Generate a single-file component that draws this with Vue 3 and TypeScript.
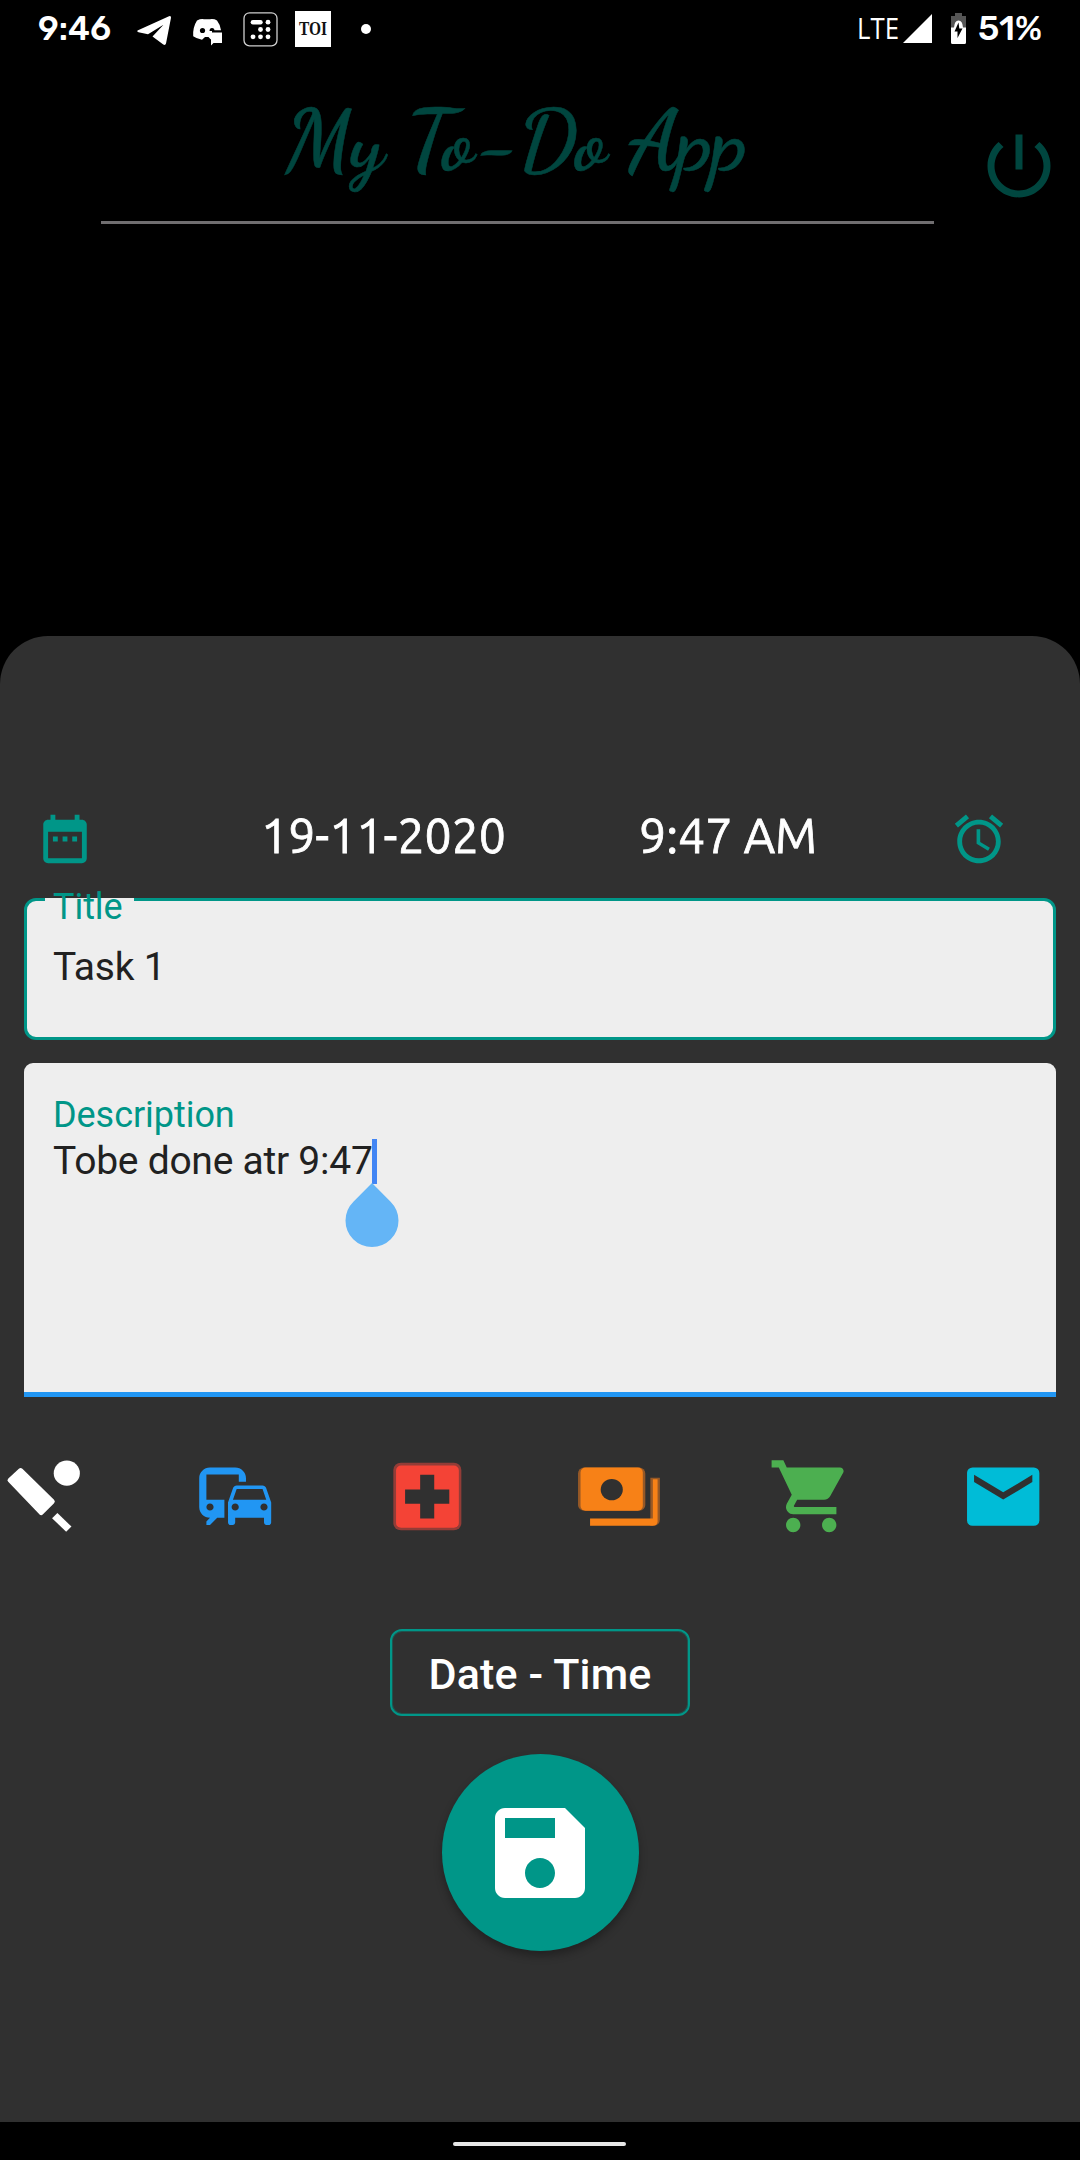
<script setup lang="ts">
import { ref } from 'vue'

interface Category {
  name: string
  box: string
}

const categories: Category[] = [
  { name: 'sports', box: '0 -1 86 89' },
  { name: 'commute', box: '0 0 24 24' },
  { name: 'health', box: '0 -1 86 89' },
  { name: 'money', box: '0 -1 86 89' },
  { name: 'shopping', box: '0 0 24 24' },
  { name: 'mail', box: '0 -1 86 89' },
]

const date = ref('19-11-2020')
const time = ref('9:47 AM')
const title = ref('Task 1')
const description = ref('Tobe done atr 9:47')
</script>

<template>
  <div class="screen">
    <header class="status">
      <svg class="clock" width="73" height="58"><text x="0" y="40" textLength="73" lengthAdjust="spacingAndGlyphs">9:46</text></svg>
      <svg class="tg" width="34" height="58"><path d="M0.5 30.500L32 16.200q2.200-.7 2 1.500L29 43.500q-.7 2.200-2.700 1L15.500 36.500L26.500 24.800L11 34.300L1.500 32.200Q-.500 31.500 .5 30.500z" fill="#fff" /></svg>
      <svg class="dc" width="31" height="58">
        <path d="M5 20.500q4-2 7-1.300h6q4-.6 7 1.300q3.500 4.500 4 9.800h-9v9h-1.500l-2-2.300h-3.500l-3 2.800q-5-.8-8.800-3.500q-.6-9 3.800-15.800z" fill="#fff" />
        <circle cx="10.500" cy="30.500" r="2.600" fill="#000" />
        <path d="M17.500 31q0-3 2.500-3t2.500 3" fill="#000" />
        <path d="M19 32.500h11v10.500h-8.500l-2.500 2.600z" fill="#fff" />
      </svg>
      <svg class="grid" width="35" height="58" fill="#fff">
        <rect x="1" y="12.800" width="33" height="33" rx="5.500" fill="none" stroke="#d0d0d0" stroke-width="1.300" />
        <rect x="7.700" y="20" width="12" height="4.400" rx="2.200" />
        <circle cx="25" cy="22.200" r="2.400" />
        <circle cx="17.500" cy="29.500" r="2.400" /><circle cx="25" cy="29.500" r="2.400" />
        <circle cx="10" cy="36.800" r="2.400" /><circle cx="17.500" cy="36.800" r="2.400" /><circle cx="25" cy="36.800" r="2.400" />
      </svg>
      <svg class="toi" width="36" height="58">
        <rect y="11" width="36" height="36" fill="#fff" />
        <text x="4" y="35" textLength="28" lengthAdjust="spacingAndGlyphs">TOI</text>
      </svg>
      <span class="dot"></span>
      <span class="spacer"></span>
      <svg class="lte" width="42" height="58"><text x="0" y="38.500" textLength="42" lengthAdjust="spacingAndGlyphs">LTE</text></svg>
      <svg class="signal" width="29" height="58"><path d="M0 43L29 14V43z" fill="#fff" /></svg>
      <svg class="battery" width="15" height="58">
        <path d="M4 13h7v3h4v12h-15v-12h4z" fill="#555" />
        <path d="M0 27.500h3q.5-7 4.500-7t4.500 7h3v15q0 1.500-1.500 1.500h-12q-1.500 0-1.500-1.500z" fill="#fff" />
        <path d="M7.500 22.500L3.500 31.500h3v6.500l5-9.500h-3.200z" fill="#000" />
      </svg>
      <svg class="percent" width="64" height="58"><text x="0" y="40" textLength="64" lengthAdjust="spacingAndGlyphs">51%</text></svg>
    </header>

    <div class="appbar">
      <div class="heading">
        <svg class="brand" width="833" height="140"><text x="184" y="87" textLength="462" lengthAdjust="spacingAndGlyphs">My To-Do App</text></svg>
      </div>
      <svg class="power" viewBox="0 0 24 24" width="84" height="84"><path d="M13 3h-2v10h2V3zm4.830 2.170l-1.420 1.420C17.990 7.860 19 9.810 19 12c0 3.870-3.130 7-7 7s-7-3.130-7-7c0-2.190 1.010-4.140 2.580-5.420L6.170 5.170C4.230 6.820 3 9.260 3 12c0 4.970 4.030 9 9 9s9-4.030 9-9c0-2.740-1.230-5.180-3.170-6.830z" /></svg>
    </div>

    <main class="sheet">
      <div class="when">
        <svg class="teal" viewBox="0 0 24 24" width="58" height="58"><path d="M9 11H7v2h2v-2zm4 0h-2v2h2v-2zm4 0h-2v2h2v-2zm2-7h-1V2h-2v2H8V2H6v2H5c-1.110 0-1.990.9-1.990 2L3 20c0 1.100.89 2 2 2h14c1.100 0 2-.9 2-2V6c0-1.100-.9-2-2-2zm0 16H5V9h14v11z" /></svg>
        <svg class="date" width="245" height="58"><text x="0" y="43" textLength="245" lengthAdjust="spacingAndGlyphs">{{ date }}</text></svg>
        <svg class="time" width="178" height="58"><text x="0" y="43" textLength="178" lengthAdjust="spacingAndGlyphs">{{ time }}</text></svg>
        <svg class="teal" viewBox="0 0 24 24" width="58" height="58"><path d="M22 5.720l-4.600-3.860-1.290 1.530 4.600 3.860L22 5.720zM7.880 3.390L6.600 1.860 2 5.710l1.290 1.530 4.590-3.850zM12.500 8H11v6l4.750 2.850.75-1.230-4-2.370V8zM12 4c-4.970 0-9 4.030-9 9s4.020 9 9 9c4.970 0 9-4.030 9-9s-4.030-9-9-9zm0 16c-3.870 0-7-3.130-7-7s3.130-7 7-7 7 3.130 7 7-3.130 7-7 7z" /></svg>
      </div>

      <div class="field outlined">
        <span class="notch"></span>
        <label class="label">Title</label>
        <div class="value">{{ title }}</div>
      </div>

      <div class="field filled">
        <label class="label">Description</label>
        <div class="value line">{{ description }}<span class="caret"></span>
          <svg class="handle" width="54" height="64" viewBox="0 0 54 64"><path d="M27 0L45.600 18.700A26.500 26.500 0 1 1 8.400 18.700z" fill="#64b5f6" /></svg>
        </div>
      </div>

      <div class="categories">
        <svg v-for="c in categories" :key="c.name" :viewBox="c.box" width="86.4" height="86.4" preserveAspectRatio="none">
          <g v-if="c.name === 'sports'" fill="#fff" stroke="#fff">
            <circle cx="66.500" cy="19.800" r="13" stroke="none" />
            <path d="M10 27L20.500 17L52 49L41 60.500z" stroke-width="5" stroke-linejoin="round" />
            <path d="M54.500 63.500L68.500 77.500" stroke-width="7.500" />
          </g>
          <path v-else-if="c.name === 'commute'" fill="#2196f3" d="M12 4H5C3.340 4 2 5.340 2 7v8c0 1.660 1.340 3 3 3l-1 1v1h1l2-2.030L9 18v-5H4V5.980L13 6v2h2V7c0-1.660-1.340-3-3-3zM5 14c.55 0 1 .45 1 1s-.45 1-1 1-1-.45-1-1 .45-1 1-1zm15.570-4.340c-.14-.4-.52-.66-.97-.66h-7.190c-.46 0-.83.26-.98.66L10 13.770l.01 5.510c0 .38.31.72.69.72h.62c.38 0 .68-.38.68-.76V18h8v1.240c0 .38.31.76.69.76h.61c.38 0 .69-.34.69-.72l.01-1.370v-4.140l-1.430-4.110zm-8.160.34h7.190l1.030 3h-9.250l1.030-3zM12 16c-.55 0-1-.45-1-1s.45-1 1-1 1 .45 1 1-.45 1-1 1zm8 0c-.55 0-1-.45-1-1s.45-1 1-1 1 .45 1 1-.45 1-1 1z" />
          <g v-else-if="c.name === 'health'">
            <rect x="9.300" y="9" width="67.700" height="69.700" rx="7.500" fill="#933c37" />
            <rect x="12" y="12" width="62.500" height="64" rx="5" fill="#f44336" />
            <path d="M36 21.300h14v15.400h15v14.500h-15v15.400h-14v-15.400h-15v-14.500h15z" fill="#303030" />
          </g>
          <g v-else-if="c.name === 'money'">
            <rect x="2" y="14" width="67" height="44.500" rx="6" fill="#965826" />
            <path d="M74 24.500h9.500v43q0 5-5 6.500h-4.500z" fill="#965826" />
            <rect x="4.500" y="14" width="62" height="44.500" rx="5" fill="#f78117" />
            <path d="M76.500 26h4.700v44q-.8 4-4.700 4h-62.500v-7.400h62.500z" fill="#f78117" />
            <circle cx="35.600" cy="36.700" r="11" fill="#303030" />
          </g>
          <path v-else-if="c.name === 'shopping'" fill="#4caf50" d="M7 18c-1.100 0-1.990.9-1.990 2S5.900 22 7 22s2-.9 2-2-.9-2-2-2zM1 2v2h2l3.600 7.590-1.350 2.450c-.16.28-.25.61-.25.96 0 1.100.9 2 2 2h12v-2H7.420c-.14 0-.25-.11-.25-.25l.03-.12.9-1.630h7.450c.75 0 1.410-.41 1.750-1.030l3.580-6.490c.08-.14.12-.31.12-.48 0-.55-.45-1-1-1H5.210l-.94-2H1zm16 16c-1.100 0-1.990.9-1.990 2s.89 2 1.990 2 2-.9 2-2-.9-2-2-2z" />
          <g v-else>
            <rect x="7" y="14" width="72" height="60" rx="5.500" fill="#00bcd7" />
            <path d="M14 21.500L43 39.500L72 21.500V29L43 47L14 29z" fill="#303030" />
          </g>
        </svg>
      </div>

      <button class="picker">Date - Time</button>
      <button class="save" aria-label="Save">
        <svg viewBox="0 0 24 24" width="120" height="120"><path fill="#fff" d="M17 3H5c-1.110 0-2 .9-2 2v14c0 1.100.89 2 2 2h14c1.100 0 2-.9 2-2V7l-4-4zm-5 16c-1.660 0-3-1.340-3-3s1.340-3 3-3 3 1.340 3 3-1.340 3-3 3zm3-10H5V5h10v4z" /></svg>
      </button>
    </main>

    <footer class="nav"><span class="pill"></span></footer>
  </div>
</template>

<style>
body {
  margin: 0;
  background: #000;
}
</style>

<style scoped>
.screen {
  width: 1080px;
  height: 2160px;
  display: flex;
  flex-direction: column;
  background: #000;
  overflow: hidden;
  font-family: Roboto, "Noto Sans", sans-serif;
}
svg {
  display: block;
  flex: none;
  overflow: visible;
}
.status {
  display: flex;
  align-items: center;
  height: 58px;
  padding: 0 38px;
}
.status text {
  fill: #fff;
}
.clock text,
.percent text {
  font: 500 34px Rubik, Roboto, sans-serif;
}
.lte text {
  font: 400 30px "Open Sans", sans-serif;
}
.status .toi text {
  font: 700 18px "Liberation Serif", serif;
  fill: #111;
}
.tg { margin-left: 26px; }
.dc { margin-left: 21px; }
.grid { margin-left: 20px; }
.toi { margin-left: 17px; }
.dot {
  width: 10px;
  height: 10px;
  margin-left: 30px;
  border-radius: 50%;
  background: #fff;
}
.spacer { flex: 1; }
.signal { margin-left: 4px; }
.battery { margin-left: 19px; }
.percent { margin-left: 12px; }

.appbar {
  display: flex;
  align-items: flex-start;
  height: 578px;
  padding-left: 101px;
}
.heading {
  margin-top: 23px;
  border-bottom: 3px solid #706e70;
}
.brand {
  font: 700 85px "Dancing Script", "Liberation Serif", cursive;
  fill: #00463f;
  stroke: #00463f;
  stroke-width: 0.5px;
}
.power {
  margin: 66px 0 0 43px;
  fill: #00463f;
}

.sheet {
  display: flex;
  flex-direction: column;
  height: 1486px;
  border-radius: 48px 48px 0 0;
  background: #303030;
}
.when {
  display: flex;
  padding: 174px 0 0 36px;
}
.teal { fill: #009688; }
.when text {
  font: 400 49px Ubuntu, "Noto Sans", sans-serif;
  fill: #fff;
  stroke: #fff;
  stroke-width: 0.8px;
}
.date { margin-left: 167px; }
.time { margin: 0 133px 0 133px; }

.field {
  position: relative;
  box-sizing: border-box;
  margin: 0 24px;
  background: #eee;
  color: #212121;
}
.label {
  display: block;
  font-size: 36px;
  line-height: 42px;
  letter-spacing: -0.05px;
  color: #009688;
}
.value {
  font-size: 39px;
  line-height: 47px;
  letter-spacing: -0.25px;
  white-space: nowrap;
}
.outlined {
  height: 142px;
  margin-top: 30px;
  padding: 0 26px;
  border: 3px solid #009688;
  border-radius: 12px;
}
.outlined .label {
  position: relative;
  margin-top: -15px;
  margin-bottom: 16px;
}
.notch {
  position: absolute;
  left: 18px;
  top: -3px;
  width: 89px;
  height: 4px;
  background: #eee;
}
.filled {
  height: 334px;
  margin-top: 23px;
  padding: 31px 29px 0;
  border-bottom: 5px solid #2196f3;
  border-radius: 9px 9px 0 0;
}
.line {
  position: relative;
  width: fit-content;
  margin-top: 2px;
}
.caret {
  position: absolute;
  left: 319px;
  top: 1px;
  width: 5px;
  height: 45px;
  background: #4285f4;
}
.handle {
  position: absolute;
  left: 291.5px;
  top: 44.5px;
}
.categories {
  display: flex;
  gap: 105.6px;
  margin-top: 56px;
}
button {
  padding: 0;
  font-family: inherit;
  align-self: center;
}
.picker {
  flex: none;
  width: 300px;
  height: 87px;
  margin-top: 90px;
  padding-top: 2px;
  border: 2px solid #009688;
  border-radius: 12px;
  box-shadow: inset 0 0 0 1px rgba(0, 150, 136, 0.35);
  background: transparent;
  color: #fff;
  font-size: 43px;
  font-weight: 500;
  letter-spacing: 0.15px;
}
.save {
  display: flex;
  flex: none;
  align-items: center;
  justify-content: center;
  width: 197px;
  height: 197px;
  margin-top: 38px;
  border: 0;
  border-radius: 50%;
  background: #009688;
  box-shadow: 0 5px 8px rgba(0, 0, 0, 0.3);
}
.nav {
  display: flex;
  justify-content: center;
  height: 38px;
  padding-right: 1px;
  background: #000;
}
.pill {
  width: 173px;
  height: 4px;
  margin-top: 20px;
  border-radius: 2px;
  background: #e8e8e8;
}
</style>
